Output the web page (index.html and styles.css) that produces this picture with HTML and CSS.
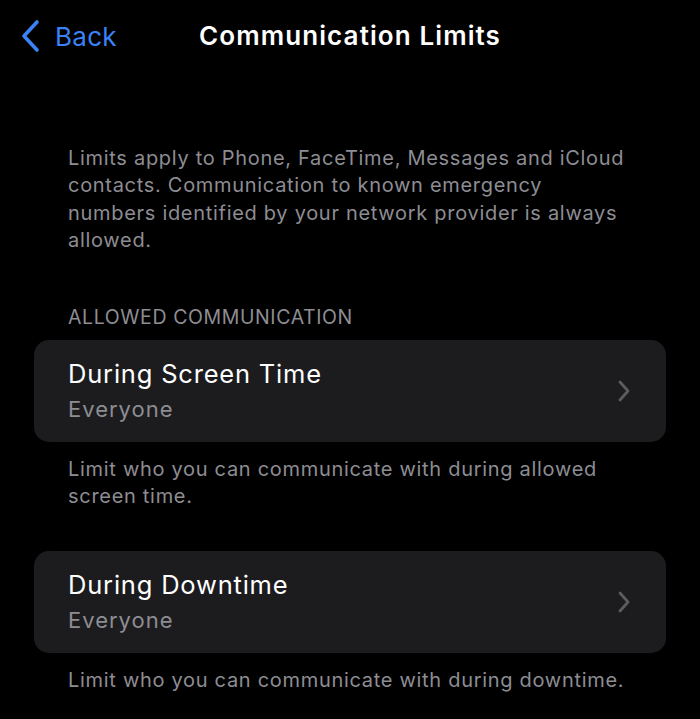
FILE: index.html
```html
<!DOCTYPE html>
<html>

<head>
    <title>Communication Limits</title>
    <link rel="stylesheet" href="styles.css">
</head>

<body>
    <div class="navbar">
        <a class="back" href="#">
            <svg class="back-chevron" width="20" height="34" viewBox="0 0 20 34">
                <path d="M17 3 L4 17 L17 31" fill="none" stroke="#3b82f6" stroke-width="3.6" stroke-linecap="round" stroke-linejoin="round" />
            </svg>
            <span>Back</span>
        </a>
        <h1 class="title">Communication Limits</h1>
    </div>

    <p class="note intro">Limits apply to Phone, FaceTime, Messages and iCloud contacts. Communication to known emergency numbers identified by your network provider is always allowed.</p>

    <div class="section-header">ALLOWED COMMUNICATION</div>

    <div class="card">
        <div class="card-text">
            <div class="card-title">During Screen Time</div>
            <div class="card-value">Everyone</div>
        </div>
        <svg class="chevron" width="14" height="22" viewBox="0 0 14 22">
            <path d="M3 2 L11 11 L3 20" fill="none" stroke="#5b5b60" stroke-width="2.8" stroke-linecap="round" stroke-linejoin="round" />
        </svg>
    </div>
    <p class="note footer">Limit who you can communicate with during allowed screen time.</p>

    <div class="card second">
        <div class="card-text">
            <div class="card-title">During Downtime</div>
            <div class="card-value">Everyone</div>
        </div>
        <svg class="chevron" width="14" height="22" viewBox="0 0 14 22">
            <path d="M3 2 L11 11 L3 20" fill="none" stroke="#5b5b60" stroke-width="2.8" stroke-linecap="round" stroke-linejoin="round" />
        </svg>
    </div>
    <p class="note footer">Limit who you can communicate with during downtime.</p>
</body>

</html>
```

FILE: styles.css
```css
body {
    margin: 0;
    background-color: #000;
    font-family: Inter, "Noto Sans", sans-serif;
    color: #fff;
    width: 700px;
    height: 719px;
    overflow: hidden;
}

.navbar {
    position: relative;
    height: 71px;
    display: flex;
    align-items: center;
    justify-content: center;
}

.back {
    position: absolute;
    left: 20px;
    top: 19px;
    display: flex;
    align-items: center;
    gap: 15px;
    text-decoration: none;
    color: #3b82f6;
    font-size: 26px;
    letter-spacing: 0.3px;
}

.title {
    margin: 0;
    font-size: 26px;
    font-weight: 600;
    letter-spacing: 1.1px;
}

.note {
    margin: 0;
    padding: 0 66px 0 68px;
    color: #8d8d93;
    font-size: 20px;
    line-height: 27.3px;
    letter-spacing: 0.7px;
}

.intro {
    margin-top: 74px;
}

.section-header {
    margin-top: 51px;
    padding-left: 68px;
    color: #8d8d93;
    font-size: 19.5px;
    line-height: 24px;
    letter-spacing: 0.6px;
}

.card {
    margin: 11px 34px 0;
    height: 102px;
    background-color: #1c1c1e;
    border-radius: 15px;
    display: flex;
    align-items: center;
    padding: 0 34px;
}

.card.second {
    margin-top: 40px;
}

.card-text {
    flex: 1;
}

.card-title {
    font-size: 25.5px;
    line-height: 36px;
    letter-spacing: 0.8px;
}

.card-value {
    color: #8d8d93;
    font-size: 22px;
    line-height: 34px;
    letter-spacing: 1px;
}

.chevron {
    margin-right: 1px;
}

.footer {
    margin-top: 14px;
}
```
